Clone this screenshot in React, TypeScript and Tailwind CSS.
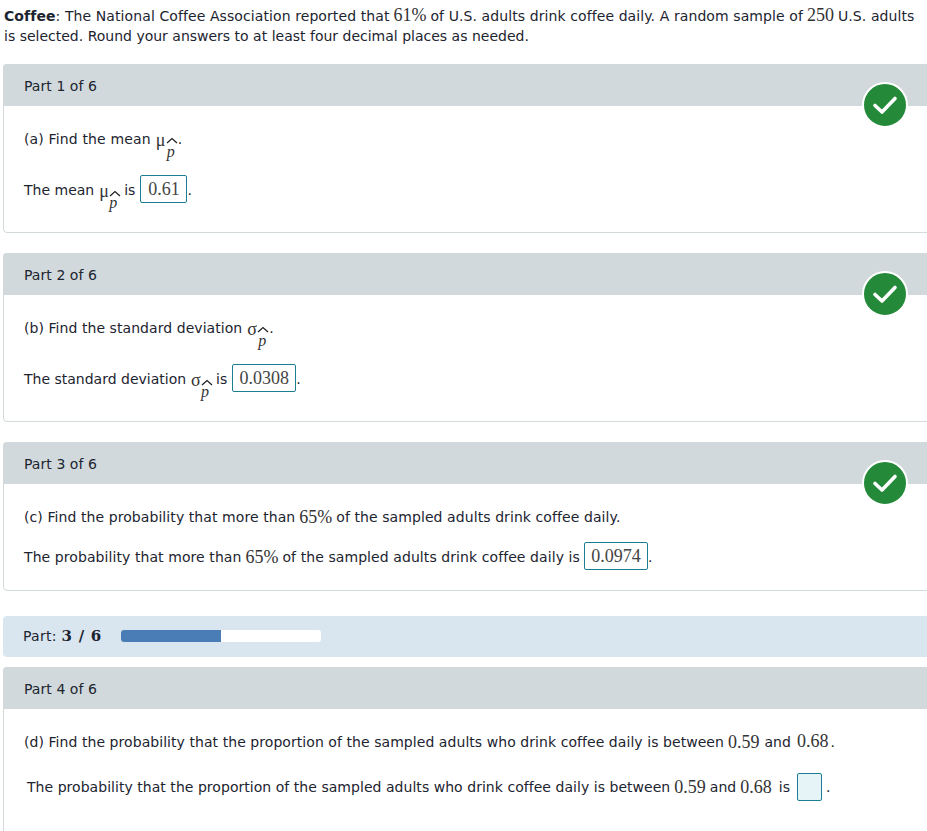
const serif = "font-['Liberation_Serif',serif] text-[18px] leading-none tracking-normal";

function Num({ tight, children }: { tight?: boolean; children: React.ReactNode }) {
  return <span className={`${serif} ml-[4px] ${tight ? "" : "mr-[4px]"} text-[#333]`}>{children}</span>;
}

// symbol with a hatted p below it, e.g. mu sub p-hat
function HatSub({ symbol, tight, low }: { symbol: string; tight?: boolean; low?: boolean }) {
  return (
    <span className={`relative ml-[5px] ${tight ? "" : "mr-[3px]"} inline-block h-[20px] w-[22px] align-middle`}>
      <span className={`${serif} absolute left-0 top-[2px] text-[#333]`}>{symbol}</span>
      <svg className={`absolute left-[10px] ${low ? "top-[10px]" : "top-[8px]"}`} width="12" height="7" viewBox="0 0 12 7">
        <path d="M1 6 L6 1.5 L11 6" fill="none" stroke="#222" strokeWidth="1.3" />
      </svg>
      <span className={`absolute ${low ? "left-[10px] top-[14px]" : "left-[11px] top-[14px]"} font-['Liberation_Serif',serif] text-[16px] italic leading-[18px] text-[#333]`}>p</span>
    </span>
  );
}

function Answer({ value, width, gap }: { value?: string; width: string; gap: string }) {
  return (
    <span
      className={`${serif} ${width} ${gap} inline-flex h-[28px] items-center justify-center rounded-[2px] border border-[#1b7f93] ${value ? "mb-[2px] bg-white" : "bg-[#e6f4f8]"} text-[#444]`}
    >
      {value}
    </span>
  );
}

function Check() {
  return (
    <div className="absolute right-[24px] top-[17px] flex h-[46px] w-[46px] items-center justify-center rounded-full border-2 border-white bg-[#248a3a]">
      <svg width="28" height="22" viewBox="0 0 28 22">
        <path d="M4 11.5 L11 18 L24 4.5" fill="none" stroke="#fff" strokeWidth="3.6" strokeLinecap="round" strokeLinejoin="round" />
      </svg>
    </div>
  );
}

function Part({ n, done, className, children }: { n: number; done?: boolean; className: string; children: React.ReactNode }) {
  return (
    <section className={`relative ml-[3px] w-[930px] rounded-[4px] border border-[#d3dadc] ${className}`}>
      <div className="-m-px flex h-[42px] items-center rounded-t-[4px] bg-[#d1d9dc] pl-[21px] pt-[2px] tracking-[0.06px] text-[#1c2430]">Part {n} of 6</div>
      {children}
      {done && <Check />}
    </section>
  );
}

function Row({ className, children }: { className: string; children: React.ReactNode }) {
  return <div className={`flex h-[28px] items-center whitespace-pre pl-[20px] ${className}`}>{children}</div>;
}

export default function App() {
  return (
    <div className="h-[831px] w-[927px] overflow-hidden bg-white font-['DejaVu_Sans',sans-serif] text-[14px] text-[#1c2430]">
      <div className="pl-[4px] pt-[6px] leading-[20px]">
        <p className="whitespace-pre tracking-[0.09px]">
          <b>Coffee</b>: The National Coffee Association reported that<Num>61%</Num>of U.S. adults drink coffee daily. A random sample of<Num>250</Num>U.S. adults
        </p>
        <p className="whitespace-pre">is selected. Round your answers to at least four decimal places as needed.</p>
      </div>

      <Part n={1} done className="mt-[18px] h-[169px]">
        <Row className="mt-[20px] tracking-[0.15px]">(a) Find the mean<HatSub symbol="μ" tight />.</Row>
        <Row className="mt-[22px] pt-[2px]">The mean<HatSub symbol="μ" low />is<Answer value="0.61" width="w-[47px]" gap="ml-[5px]" />.</Row>
      </Part>

      <Part n={2} done className="mt-[20px] h-[169px]">
        <Row className="mt-[20px] tracking-[0.06px]">(b) Find the standard deviation<HatSub symbol="σ" tight />.</Row>
        <Row className="mt-[22px] pt-[2px]">The standard deviation<HatSub symbol="σ" low />is<Answer value="0.0308" width="w-[64px]" gap="ml-[5px]" />.</Row>
      </Part>

      <Part n={3} done className="mt-[20px] h-[149px]">
        <Row className="mt-[20px] tracking-[0.08px]">(c) Find the probability that more than<Num>65%</Num>of the sampled adults drink coffee daily.</Row>
        <Row className="mt-[12px] tracking-[0.08px]">The probability that more than<Num>65%</Num>of the sampled adults drink coffee daily is<Answer value="0.0974" width="w-[64px]" gap="ml-[4px]" />.</Row>
      </Part>

      <div className="ml-[3px] mt-[25px] flex h-[41px] w-[930px] items-center rounded-[4px] bg-[#d9e5ef] pl-[20px]">
        <span className="w-[98px] tracking-[0.3px]">Part: <b className="font-['DejaVu_Serif',serif] text-[15px] tracking-[0.7px]">3 / 6</b></span>
        <div className="mb-[1px] h-[12px] w-[200px] overflow-hidden rounded-[3px] bg-white">
          <div className="h-full bg-[#4a7db5]" style={{ width: `${(3 / 6) * 100}%` }} />
        </div>
      </div>

      <Part n={4} className="mt-[10px] h-[200px]">
        <Row className="mt-[20px] tracking-[0.06px]">(d) Find the probability that the proportion of the sampled adults who drink coffee daily is between<Num>0.59</Num><span className="ml-[1px]">and</span><span className="ml-[2px]"><Num tight>0.68</Num></span><span className="ml-[2px]">.</span></Row>
        <Row className="mt-[17px] pl-[23px] tracking-[0.04px]">The probability that the proportion of the sampled adults who drink coffee daily is between<Num>0.59</Num>and<Num>0.68</Num><span className="ml-[3px]">is</span><Answer width="w-[25px]" gap="ml-[7px]" /><span className="ml-[4px]">.</span></Row>
      </Part>
    </div>
  );
}
